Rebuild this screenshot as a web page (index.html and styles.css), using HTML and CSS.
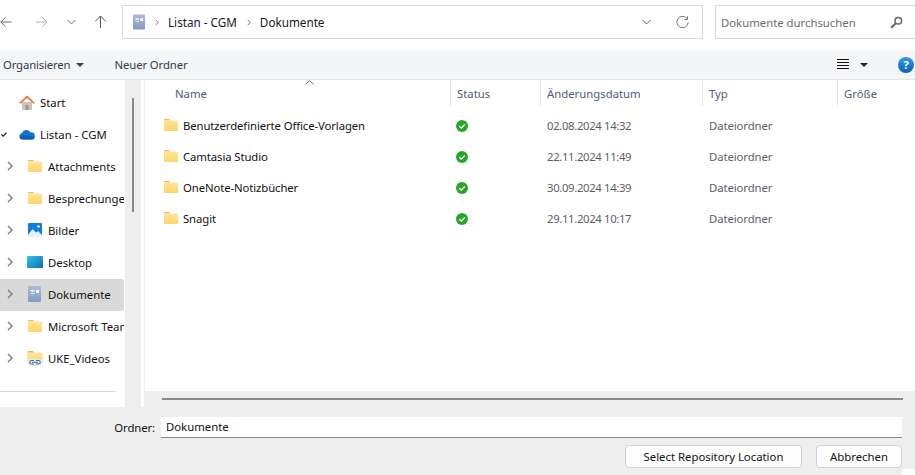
FILE: index.html
```html
<!DOCTYPE html>
<html lang="de">
<head>
  <meta charset="UTF-8">
  <meta name="viewport" content="width=device-width, initial-scale=1.0">
  <title>Select Repository Location</title>
  <link rel="stylesheet" href="styles.css">
</head>
<body>
  <svg class="defs" width="0" height="0">
    <defs>
      <linearGradient id="folder-fill" x1="0" y1="0" x2="0" y2="1">
        <stop offset="0" stop-color="#ffe69c"/>
        <stop offset="1" stop-color="#fcd468"/>
      </linearGradient>
      <linearGradient id="doc-fill" x1="0" y1="0" x2="0" y2="1">
        <stop offset="0" stop-color="#a9bdd6"/>
        <stop offset="1" stop-color="#7f9cc0"/>
      </linearGradient>
      <linearGradient id="desk-fill" x1="0" y1="0" x2="1" y2="1">
        <stop offset="0" stop-color="#35c3e6"/>
        <stop offset="1" stop-color="#0f6fb4"/>
      </linearGradient>
      <symbol id="folder" viewBox="0 0 14 12">
        <path d="M0 1q0-1 1-1h4l1.500 1.500H0z" fill="#f5b83d"/>
        <path d="M0 1.500h13q1 0 1 1V11q0 1-1 1H1q-1 0-1-1z" fill="url(#folder-fill)"/>
      </symbol>
      <symbol id="doc" viewBox="0 0 13 16">
        <rect width="13" height="16" rx="1" fill="url(#doc-fill)"/>
        <rect x="2.500" y="4" width="4" height="1.500" fill="#fff"/>
        <rect x="8" y="4" width="3" height="3" fill="#fff"/>
        <rect x="2.500" y="7" width="4" height="1" fill="#e4ecf5"/>
      </symbol>
      <symbol id="chev" viewBox="0 0 6 10">
        <path d="M1 1l4 4-4 4" fill="none" stroke="#808080" stroke-width="1.500"/>
      </symbol>
      <symbol id="ok" viewBox="0 0 12 12">
        <circle cx="6" cy="6" r="6" fill="#2aa52a"/>
        <path d="M3.300 6.200l2 1.900 3.400-3.600" fill="none" stroke="#fff" stroke-width="1.300"/>
      </symbol>
    </defs>
  </svg>

  <div class="dialog">
    <div class="topbar">
      <svg class="nav-back" width="12" height="12" viewBox="0 0 12 12"><path d="M11.500 6H.8M5.500 1.300L.8 6l4.700 4.700" fill="none" stroke="#6a6a6a"/></svg>
      <svg class="nav-fwd" width="13" height="12" viewBox="0 0 13 12"><path d="M.5 6h11.500M7.300 1.300L12 6l-4.700 4.700" fill="none" stroke="#b4b4b4"/></svg>
      <svg class="nav-down" width="9" height="6" viewBox="0 0 9 6"><path d="M.5 1l4 4 4-4" fill="none" stroke="#777"/></svg>
      <svg class="nav-up" width="13" height="13" viewBox="0 0 13 13"><path d="M6.500 13V1M1.300 6.300L6.500 1l5.200 5.300" fill="none" stroke="#555"/></svg>
      <div class="address">
        <svg class="crumb-icon" width="12" height="16"><use href="#doc"/></svg>
        <svg class="crumb-sep" width="4" height="7"><use href="#chev"/></svg>
        <span>Listan - CGM</span>
        <svg class="crumb-sep" width="4" height="7"><use href="#chev"/></svg>
        <span>Dokumente</span>
        <svg class="addr-down" width="9" height="6" viewBox="0 0 9 6"><path d="M.5 1l4 4 4-4" fill="none" stroke="#666"/></svg>
        <svg class="addr-refresh" width="13" height="13" viewBox="0 0 13 13"><path d="M10.800 2.300A5.700 5.700 0 1 0 12.200 6.500" fill="none" stroke="#777"/><path d="M11.500 .3v3.200H8.300" fill="none" stroke="#777"/></svg>
      </div>
      <div class="search">
        <span>Dokumente durchsuchen</span>
        <svg width="13" height="13" viewBox="0 0 13 13"><circle cx="8.300" cy="4.700" r="3.300" fill="none" stroke="#666" stroke-width="1.500"/><path d="M5.800 7.200L1.300 11.700" stroke="#666" stroke-width="2"/></svg>
      </div>
    </div>

    <div class="commands">
      <span class="cmd-org">Organisieren</span>
      <span class="caret"></span>
      <span class="cmd-new">Neuer Ordner</span>
      <svg class="view-icon" width="12" height="11" viewBox="0 0 12 11"><path d="M0 .5h12M0 3.500h12M0 6.500h12M0 9.500h12" stroke="#111"/></svg>
      <span class="caret caret-dark"></span>
      <span class="help">?</span>
    </div>

    <div class="main">
      <nav class="sidebar">
        <div class="tree-row">
          <span class="tree-arrow"></span>
          <svg class="top-icon" width="16" height="15" viewBox="0 0 16 15"><path d="M3 7h10v8H3z" fill="#c9c4bd"/><path d="M6.500 10h3v5h-3z" fill="#9a948c"/><path d="M0 8l8-7.500L16 8l-1.500.8L8 3 1.500 8.800z" fill="#e8762c"/></svg>
          <span class="tree-label top-label">Start</span>
        </div>
        <div class="tree-row">
          <span class="tree-arrow"><svg width="6" height="5" viewBox="0 0 6 5"><path d="M.5 2.500l1.700 1.700L5.500.6" fill="none" stroke="#222" stroke-width="1.200"/></svg></span>
          <svg class="top-icon" width="16" height="11" viewBox="0 0 16 10"><path d="M3.500 10a3.300 3.300 0 0 1-.5-6.500A4.700 4.700 0 0 1 11.500 3 3.500 3.500 0 0 1 13 10z" fill="#0a74d0"/><path d="M3.500 10Q1 9.600 .4 7.500L6 5.500l9.800 2.800Q15 10 13 10z" fill="#0f5eb0"/></svg>
          <span class="tree-label top-label">Listan - CGM</span>
        </div>
        <div class="tree-row">
          <svg class="tree-chev" width="6" height="10"><use href="#chev"/></svg>
          <svg class="sub-icon" width="14" height="12"><use href="#folder"/></svg>
          <span class="tree-label">Attachments</span>
        </div>
        <div class="tree-row">
          <svg class="tree-chev" width="6" height="10"><use href="#chev"/></svg>
          <svg class="sub-icon" width="14" height="12"><use href="#folder"/></svg>
          <span class="tree-label">Besprechungen</span>
        </div>
        <div class="tree-row">
          <svg class="tree-chev" width="6" height="10"><use href="#chev"/></svg>
          <svg class="sub-icon" width="14" height="14" viewBox="0 0 14 14"><rect width="14" height="14" rx="1" fill="#0f7fd6"/><path d="M0 12l4.500-6L8 9.500l2-1.500 4 4v2H0z" fill="#e6f2fb"/><circle cx="10.500" cy="3.500" r="1.300" fill="#fff"/></svg>
          <span class="tree-label">Bilder</span>
        </div>
        <div class="tree-row">
          <svg class="tree-chev" width="6" height="10"><use href="#chev"/></svg>
          <svg class="sub-icon wide-icon" width="16" height="12" viewBox="0 0 16 12"><rect width="16" height="12" rx="1" fill="url(#desk-fill)"/></svg>
          <span class="tree-label">Desktop</span>
        </div>
        <div class="tree-row is-active">
          <svg class="tree-chev" width="6" height="10"><use href="#chev"/></svg>
          <svg class="sub-icon doc-icon" width="13" height="16"><use href="#doc"/></svg>
          <span class="tree-label">Dokumente</span>
        </div>
        <div class="tree-row">
          <svg class="tree-chev" width="6" height="10"><use href="#chev"/></svg>
          <svg class="sub-icon" width="14" height="12"><use href="#folder"/></svg>
          <span class="tree-label">Microsoft Teams</span>
        </div>
        <div class="tree-row">
          <svg class="tree-chev" width="6" height="10"><use href="#chev"/></svg>
          <svg class="sub-icon wide-icon" width="16" height="15" viewBox="0 0 16 15"><use href="#folder" width="16" height="13"/><rect x="1" y="8" width="14" height="6.500" rx="3" fill="#e8eef6"/><path d="M7 9.500H4.500a1.700 1.700 0 0 0 0 3.500H7M9 9.500h2.500a1.700 1.700 0 0 1 0 3.500H9M5 11.250h6" fill="none" stroke="#3f6ea6" stroke-width="1.100"/></svg>
          <span class="tree-label">UKE_Videos</span>
        </div>
        <div class="tree-divider"></div>
      </nav>

      <div class="side-scroll"><span class="side-thumb"></span></div>
      <div class="side-gap"></div>

      <section class="files">
        <div class="file-head">
          <div class="head-cell head-name">Name<svg class="sort-arrow" width="9" height="5" viewBox="0 0 9 5"><path d="M.5 4.500l4-4 4 4" fill="none" stroke="#777"/></svg></div>
          <div class="head-cell">Status</div>
          <div class="head-cell">Änderungsdatum</div>
          <div class="head-cell">Typ</div>
          <div class="head-cell">Größe</div>
        </div>
        <div class="file-list">
          <div class="file-row">
            <div class="file-name"><svg width="14" height="12"><use href="#folder"/></svg>Benutzerdefinierte Office-Vorlagen</div>
            <div class="file-status"><svg width="12" height="12"><use href="#ok"/></svg></div>
            <div class="file-meta file-date">02.08.2024 14:32</div>
            <div class="file-meta">Dateiordner</div>
          </div>
          <div class="file-row">
            <div class="file-name"><svg width="14" height="12"><use href="#folder"/></svg>Camtasia Studio</div>
            <div class="file-status"><svg width="12" height="12"><use href="#ok"/></svg></div>
            <div class="file-meta file-date">22.11.2024 11:49</div>
            <div class="file-meta">Dateiordner</div>
          </div>
          <div class="file-row">
            <div class="file-name"><svg width="14" height="12"><use href="#folder"/></svg>OneNote-Notizbücher</div>
            <div class="file-status"><svg width="12" height="12"><use href="#ok"/></svg></div>
            <div class="file-meta file-date">30.09.2024 14:39</div>
            <div class="file-meta">Dateiordner</div>
          </div>
          <div class="file-row">
            <div class="file-name"><svg width="14" height="12"><use href="#folder"/></svg>Snagit</div>
            <div class="file-status"><svg width="12" height="12"><use href="#ok"/></svg></div>
            <div class="file-meta file-date">29.11.2024 10:17</div>
            <div class="file-meta">Dateiordner</div>
          </div>
        </div>
        <div class="h-scroll"><span class="h-thumb"></span></div>
      </section>
    </div>

    <div class="footer">
      <div class="folder-line">
        <label class="folder-label">Ordner:</label>
        <div class="folder-input">Dokumente</div>
      </div>
      <div class="buttons">
        <button class="btn btn-select">Select Repository Location</button>
        <button class="btn btn-cancel">Abbrechen</button>
      </div>
    </div>
  </div>
</body>
</html>
```

FILE: styles.css
```css
* {
  box-sizing: border-box;
}
html, body {
  margin: 0;
  height: 100%;
  overflow: hidden;
}
body {
  font-family: 'Noto Sans', 'Open Sans', sans-serif;
  font-size: 11.33px;
  color: #1a1a1a;
  background: #fff;
}
svg {
  display: block;
  flex: none;
}
.defs {
  position: absolute;
}
.dialog {
  width: 915px;
  height: 475px;
  display: flex;
  flex-direction: column;
}

/* top bar */
.topbar {
  height: 50px;
  display: flex;
  align-items: flex-start;
  padding-top: 5px;
  background: #fff;
}
.nav-back, .nav-fwd, .nav-down, .nav-up {
  margin-top: 11px;
}
.nav-back { margin-left: 0; }
.nav-fwd { margin-left: 23px; }
.nav-down { margin-left: 19px; margin-top: 14px; }
.nav-up { margin-left: 18px; margin-top: 10px; }
.address {
  margin-left: 15px;
  width: 581px;
  height: 34px;
  border: 1px solid #d9d9d9;
  display: flex;
  align-items: center;
  padding-left: 10px;
  font-size: 11.7px;
}
.crumb-sep {
  margin: 0 9px 0 10px;
}
.addr-down {
  margin-left: auto;
}
.addr-refresh {
  margin: 0 13px 0 25px;
}
.search {
  margin-left: 12px;
  width: 200px;
  height: 34px;
  border: 1px solid #d9d9d9;
  border-right: none;
  display: flex;
  align-items: center;
  justify-content: space-between;
  padding: 0 12px 0 5px;
  color: #6b6b6b;
}

/* command bar */
.commands {
  height: 30px;
  background: #f3f5f7;
  border-bottom: 1px solid #e4e4e4;
  display: flex;
  align-items: center;
  padding-left: 3px;
}
.cmd-org {
  color: #33394a;
  letter-spacing: -0.15px;
}
.caret {
  width: 0;
  height: 0;
  margin-left: 6px;
  border-left: 4px solid transparent;
  border-right: 4px solid transparent;
  border-top: 4px solid #3a4254;
}
.cmd-new {
  margin-left: 30px;
  color: #33394a;
  letter-spacing: -0.1px;
}
.view-icon {
  margin-left: auto;
}
.caret-dark {
  margin-left: 11px;
  border-top-color: #15264a;
}
.help {
  margin: 0 1px 0 30px;
  width: 16px;
  height: 16px;
  border-radius: 50%;
  background: linear-gradient(#2f9bea, #0a62b8);
  color: #fff;
  font-size: 11px;
  font-weight: 700;
  line-height: 16px;
  text-align: center;
}

/* main area */
.main {
  height: 327px;
  display: flex;
}
.sidebar {
  width: 125px;
  padding-top: 7px;
  overflow: hidden;
  flex: none;
}
.tree-row {
  height: 32px;
  width: 124px;
  padding-bottom: 2px;
  display: flex;
  align-items: center;
  white-space: nowrap;
  overflow: hidden;
  color: #111;
}
.tree-row.is-active {
  background: #d9d9d9;
  border-radius: 0 3px 3px 0;
}
.tree-arrow {
  width: 19px;
  flex: none;
  padding-left: 1px;
}
.tree-chev {
  margin-left: 7px;
}
.top-icon {
  margin-right: 5px;
}
.sub-icon {
  margin: 0 6px 0 15px;
}
.wide-icon {
  margin: 0 5px 0 14px;
}
.doc-icon {
  margin-right: 7px;
}
.tree-divider {
  width: 116px;
  margin-top: 16px;
  border-top: 1px solid #d9d9d9;
}
.side-scroll {
  width: 16px;
  background: #eeeeee;
  padding: 18px 0 0 7px;
  flex: none;
}
.side-thumb {
  display: block;
  width: 2px;
  height: 114px;
  background: #8a8a8a;
}
.side-gap {
  width: 4px;
  border-right: 1px solid #f0f0f0;
  flex: none;
}

/* file list */
.files {
  flex: 1;
  display: flex;
  flex-direction: column;
}
.file-head, .file-row {
  display: grid;
  grid-template-columns: 305px 90px 162px 135px 1fr;
}
.file-head {
  height: 26px;
}
.head-cell {
  position: relative;
  border-left: 1px solid #e5e5e5;
  padding: 6px 0 0 6px;
  color: #4c5c78;
}
.head-name {
  border-left: none;
  padding-left: 30px;
}
.sort-arrow {
  position: absolute;
  left: 160px;
  top: 0;
}
.file-list {
  flex: 1;
  padding-top: 4px;
}
.file-row {
  height: 31px;
  align-items: center;
}
.file-name {
  display: flex;
  align-items: center;
  gap: 5px;
  padding-left: 19px;
  color: #111;
  letter-spacing: -0.1px;
}
.file-name svg {
  margin-top: -2px;
}
.file-status {
  padding-left: 6px;
}
.file-meta {
  padding-left: 7px;
  color: #5d5d68;
  letter-spacing: -0.1px;
}
.file-date {
  letter-spacing: -0.35px;
}
.h-scroll {
  height: 16px;
  background: #eeeeee;
  padding: 7px 12px 0 17px;
}
.h-thumb {
  display: block;
  height: 2px;
  background: #8a8a8a;
}

/* footer */
.footer {
  position: relative;
  height: 68px;
  background: #eeeeee;
  padding-top: 10px;
}
.footer::after {
  content: "";
  position: absolute;
  right: 0;
  bottom: 0;
  width: 13px;
  height: 6px;
  background: #fff;
}
.folder-line {
  display: flex;
  align-items: center;
}
.folder-label {
  width: 155px;
  text-align: right;
  color: #111;
  letter-spacing: -0.1px;
}
.folder-input {
  margin-left: 6px;
  width: 741px;
  height: 21px;
  background: #fff;
  border-bottom: 1px solid #858585;
  padding-left: 5px;
  line-height: 20px;
  color: #111;
}
.buttons {
  display: flex;
  justify-content: flex-end;
  gap: 14px;
  margin-top: 7px;
  padding-right: 13px;
}
.btn {
  height: 23px;
  padding: 0;
  background: #fdfdfd;
  border: 1px solid #d0d0d0;
  border-radius: 4px;
  font: inherit;
  color: #111;
}
.btn-select {
  width: 177px;
}
.btn-cancel {
  width: 86px;
}
```
